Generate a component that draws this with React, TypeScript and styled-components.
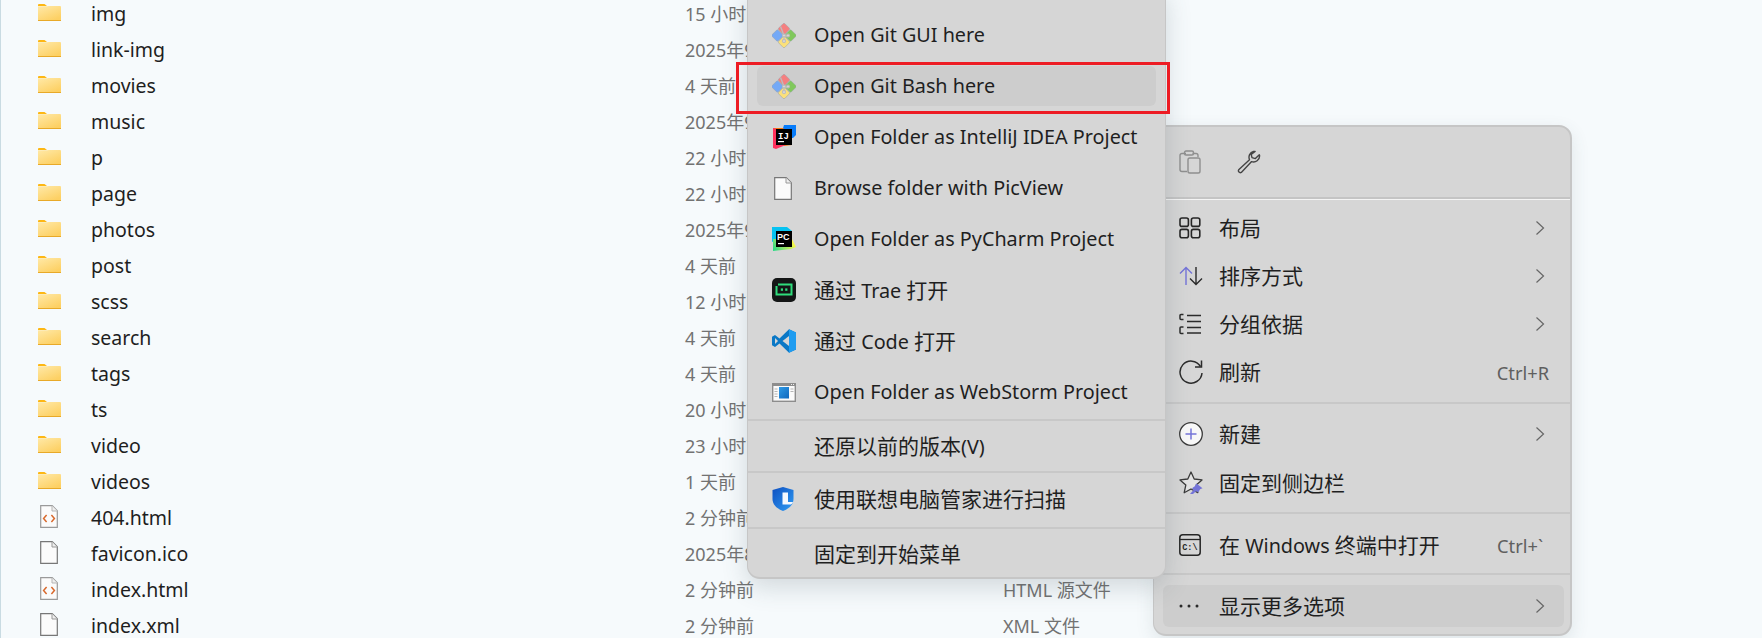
import React from "react";
import styled, { createGlobalStyle } from "styled-components";

const Global = createGlobalStyle`
  html, body { margin: 0; padding: 0; background: #f6fafc; }
  body { font-family: "Noto Sans", "Noto Sans CJK SC", sans-serif; }
`;

const Page = styled.div`
  position: relative;
  width: 1762px;
  height: 638px;
  overflow: hidden;
  background: #f6fafc;
  border-left: 1px solid #c9dbe2;
  box-sizing: border-box;
`;

const FileList = styled.div`
  display: flex;
  flex-direction: column;
  margin-top: -4px;
`;

const FileRow = styled.div`
  display: grid;
  grid-template-columns: 53px 594px 318px 1fr;
  align-items: center;
  height: 36px;
  padding-left: 37px;
  white-space: nowrap;
`;

const IconCell = styled.div`
  display: flex;
  align-items: center;
  height: 36px;
  padding-bottom: 4px;
  box-sizing: border-box;
  svg { display: block; }
`;

const FileName = styled.span`
  color: #1e1e1e;
  font-size: 19.5px;
  padding-bottom: 2px;
`;

const FileMeta = styled.span`
  color: #727272;
  font-size: 18px;
  padding-bottom: 3px;
`;

const MenuBase = styled.div`
  position: absolute;
  box-sizing: border-box;
  background: #d6d6d6;
  font-size: 19.8px;
  color: #1c1c1c;
`;

const GitMenu = styled(MenuBase)`
  left: 746px;
  top: -12px;
  width: 419px;
  height: 591px;
  padding-top: 26px;
  border-radius: 0 0 13px 13px;
  border: 1px solid #c6c6c6;
  border-bottom-width: 2px;
  z-index: 2;
  box-shadow: 0 8px 26px rgba(60, 80, 90, 0.2);
`;

const MainMenu = styled(MenuBase)`
  left: 1152px;
  top: 125px;
  width: 419px;
  height: 511px;
  border-radius: 13px;
  border: 1px solid #c6c6c6;
  border-width: 2px 2px 2px 1px;
  z-index: 1;
  box-shadow: 0 6px 18px rgba(60, 80, 90, 0.12);
`;

const Toolbar = styled.div`
  display: flex;
  align-items: center;
  gap: 36px;
  height: 70px;
  padding-left: 25px;
  border-bottom: 2px solid #c4c4c4;
  box-shadow: 0 1px 0 #f4f4f4;
`;

const Section = styled.div<{ $top: number; $bottom: number; $gap: number; $right?: number; $line?: boolean }>`
  display: flex;
  flex-direction: column;
  gap: ${(p) => p.$gap}px;
  padding: ${(p) => p.$top}px ${(p) => p.$right ?? 9}px ${(p) => p.$bottom}px 9px;
  border-bottom: ${(p) => (p.$line ? "2px solid #c8c8c8" : "0")};
`;

const Item = styled.div<{ $active?: boolean; $h: number; $iconX: number; $textX: number }>`
  display: grid;
  grid-template-columns: ${(p) => p.$textX}px 1fr auto;
  align-items: center;
  height: ${(p) => p.$h}px;
  padding-left: ${(p) => p.$iconX}px;
  padding-right: 15px;
  border-radius: 6px;
  white-space: nowrap;
  background: ${(p) => (p.$active ? "#cdcdcd" : "transparent")};
  svg { display: block; }
`;

const Label = styled.span`
  color: #1f1f1f;
  line-height: 1;
`;

const Han = styled.span`
  font-size: 21px;
`;

const Shortcut = styled.span`
  color: #5f5f5f;
  font-size: 18.3px;
  min-width: 52px;
`;

const Chevron = styled.svg`
  width: 10px;
  height: 16px;
  margin-right: 4px;
`;

const Highlight = styled.div`
  position: absolute;
  left: 735px;
  top: 62px;
  width: 434px;
  height: 52px;
  box-sizing: border-box;
  border: 3px solid #ed1c24;
  z-index: 3;
`;

const FileSlot = styled.span`
  display: block;
  padding-left: 2px;
`;

const Folder = () => (
  <svg width="23" height="17" viewBox="0 0 23 17">
    <defs>
      <linearGradient id="fg" x1="0" y1="0" x2="0.6" y2="1">
        <stop offset="0" stopColor="#ffe9a8" />
        <stop offset="1" stopColor="#fdd063" />
      </linearGradient>
    </defs>
    <path d="M0 1a1 1 0 0 1 1-1h5.500l2.500 2H0z" fill="#fdb714" />
    <path d="M0 2.200h9L11 2h11a1 1 0 0 1 1 1v14H0z" fill="url(#fg)" />
    <rect x="0" y="16" width="23" height="1" fill="#e8a928" />
  </svg>
);

const Doc = ({ html, dark }: { html?: boolean; dark?: boolean }) => (
  <svg width="18" height="23" viewBox="0 0 18 23">
    <path d="M.7.7h11.500l5.100 5.100v16.500H.7z" fill="#fbfbfb" stroke={dark ? "#777" : "#9a9a9a"} strokeWidth="1.200" />
    <path d="M12 .7v5.300h5.300" fill="#efefef" stroke={dark ? "#999" : "#b5b5b5"} strokeWidth="1" />
    {html && (
      <g fill="none" stroke="#d9692c" strokeWidth="1.500">
        <path d="M6.600 10 3.600 13.500l3 3.500" />
        <path d="M11.400 10l3 3.500-3 3.500" />
      </g>
    )}
  </svg>
);

const GitIcon = () => (
  <svg width="24" height="25" viewBox="0 0 24 25">
    <g transform="rotate(45 12 12.500)" stroke="#9aa3a8" strokeWidth="0.5">
      <rect x="3" y="3.500" width="8.700" height="8.700" rx="1.300" fill="#f57f80" />
      <rect x="12.300" y="3.500" width="8.700" height="8.700" rx="1.300" fill="#80c85c" />
      <rect x="12.300" y="12.800" width="8.700" height="8.700" rx="1.300" fill="#fbe07a" />
      <rect x="3" y="12.800" width="8.700" height="8.700" rx="1.300" fill="#74a9f6" />
    </g>
    <g stroke="#bdbdbd" strokeWidth="1.300" fill="#e8e8e8">
      <path d="M8.500 3.500 12 12.500l4.500 1M12 12.500v5.500" fill="none" />
      <circle cx="12" cy="12.500" r="1.300" />
      <circle cx="16" cy="12.500" r="1.300" />
      <circle cx="12" cy="18" r="1.500" />
    </g>
  </svg>
);

const IdeaIcon = () => (
  <svg width="24" height="25" viewBox="0 0 24 25">
    <path d="M12 0h12v10l-3 3H8z" fill="#087cfa" />
    <path d="M1 3h10l9 10v7l-8 1z" fill="#f97a12" />
    <path d="M1 3l11 3 4 13-12 5-3-1z" fill="#fe315d" />
    <rect x="4" y="4" width="16" height="16" fill="#000" />
    <rect x="6" y="16" width="6" height="1.200" fill="#fff" />
    <text x="6" y="13.500" fontSize="9" fontWeight="700" fontFamily="Liberation Mono, monospace" fill="#fff">IJ</text>
  </svg>
);

const PyIcon = () => (
  <svg width="24" height="25" viewBox="0 0 24 25">
    <defs>
      <linearGradient id="pc" x1="0" y1="1" x2="1" y2="0.6">
        <stop offset="0" stopColor="#21d789" />
        <stop offset="1" stopColor="#fcf84a" />
      </linearGradient>
    </defs>
    <path d="M0 0h15l5 4v9H4l-4 2z" fill="#07c3f2" />
    <path d="M1 12h19l4 8-5 2-18 2z" fill="url(#pc)" />
    <rect x="4" y="4" width="16" height="16" fill="#000" />
    <rect x="6" y="16" width="6" height="1.200" fill="#fff" />
    <text x="5" y="13" fontSize="9" fontWeight="700" fontFamily="Liberation Sans, sans-serif" fill="#fff">PC</text>
  </svg>
);

const TraeIcon = () => (
  <svg width="24" height="24" viewBox="0 0 24 24">
    <rect width="24" height="24" rx="5" fill="#141616" />
    <path d="M6 6.500h13.500v10H4.500V8" fill="none" stroke="#2fdc7b" strokeWidth="2" />
    <rect x="8.800" y="10.400" width="2.200" height="2.400" fill="#2fdc7b" />
    <rect x="13.200" y="10.400" width="2.200" height="2.400" fill="#2fdc7b" />
  </svg>
);

const CodeIcon = () => (
  <svg width="24" height="24" viewBox="0 0 24 24">
    <path d="M17 0.300 24 3.500v17l-7 3.200L7.500 14.500 3 18 0 16.200V7.800L3 6l4.500 3.500z" fill="#0a78c6" />
    <path d="M17 .3 24 3.500v17l-7 3.200z" fill="#1f9cf0" />
    <path d="M17 7 10.500 12 17 17z" fill="#d6d6d6" />
    <path d="M3 9v6l3-3z" fill="#d6d6d6" />
  </svg>
);

const StormIcon = () => (
  <svg width="24" height="19" viewBox="0 0 24 19">
    <rect x=".7" y=".7" width="22.600" height="17.600" fill="#fafafa" stroke="#8d8d8d" strokeWidth="1.400" />
    <rect x="1" y="1" width="22" height="2" fill="#8d8d8d" />
    <path d="M19 1.500h1M21 1.500h1" stroke="#eee" />
    <path d="M2.500 6h3M2.500 8.500h3M2.500 11h3M2.500 13.500h3M18.500 6h3M18.500 8.500h3" stroke="#b5b5b5" />
    <defs>
      <linearGradient id="ws" x1="0" y1="0" x2="1" y2="1">
        <stop offset="0" stopColor="#2f9be6" />
        <stop offset="1" stopColor="#0f67bd" />
      </linearGradient>
    </defs>
    <rect x="7" y="4" width="10" height="11.500" fill="url(#ws)" />
  </svg>
);

const ShieldIcon = () => (
  <svg width="22" height="24" viewBox="0 0 22 24">
    <defs>
      <linearGradient id="sh" x1="0" y1="0" x2="1" y2="1">
        <stop offset="0" stopColor="#0e4fc0" />
        <stop offset="1" stopColor="#2f9df5" />
      </linearGradient>
    </defs>
    <path d="M11 0 21.500 3v9c0 6-5 10-10.500 12C5.500 22 .5 18 .5 12V3z" fill="url(#sh)" />
    <path d="M10.500 5.500h5.500V15h5c-.6 1.500-1.300 2-2 2.500H10.500z" fill="#f4f8ff" />
  </svg>
);

const ClipboardIcon = () => (
  <svg width="22" height="24" viewBox="0 0 22 24" fill="none" stroke="#8f8f8f" strokeWidth="1.400">
    <path d="M7 3.500H3A2 2 0 0 0 1 5.500v14a2 2 0 0 0 2 2h5" />
    <path d="M13.500 3.500H17a2 2 0 0 1 2 2v1.500" />
    <rect x="5.500" y="1" width="9" height="4" rx="1.500" />
    <rect x="9" y="8" width="12" height="15" rx="1.800" />
  </svg>
);

const WrenchIcon = () => (
  <svg width="24" height="24" viewBox="0 0 24 24" fill="none" stroke="#444" strokeWidth="1.400" strokeLinejoin="round">
    <path d="M16.500 1.500a6 6 0 0 0-4 8.200L1.700 19.800a1.900 1.900 0 0 0 2.600 2.600L14.600 11.600a6 6 0 0 0 8-5.800l-.3-1-3.900 3.800-3.400-1-.8-3.200 3.900-3z" />
  </svg>
);

const GridIcon = () => (
  <svg width="22" height="22" viewBox="0 0 22 22" fill="none" stroke="#262626" strokeWidth="1.600">
    <rect x="1" y="1" width="8.400" height="8.400" rx="2" />
    <rect x="12.400" y="1" width="8.400" height="8.400" rx="2" />
    <rect x="1" y="12.400" width="8.400" height="8.400" rx="2" />
    <rect x="12.400" y="12.400" width="8.400" height="8.400" rx="2" />
  </svg>
);

const SortIcon = () => (
  <svg width="24" height="20" viewBox="0 0 24 20" fill="none" strokeWidth="1.400">
    <path d="M7 19V1.500M1 7.500l6-6 6 6" stroke="#7474d8" />
    <path d="M17 1v17.500M11 12.500l6 6 6-6" stroke="#2a2a2a" />
  </svg>
);

const GroupIcon = () => (
  <svg width="22" height="22" viewBox="0 0 22 22" fill="none" stroke="#2b2b2b" strokeWidth="1.500">
    <path d="M8 2.500h14M8 8.500h14M8 14.500h14M8 20h14" />
    <path d="M4.500 1.500H2a1 1 0 0 0-1 1v3a1 1 0 0 0 1 1h2.500M4.500 14H2a1 1 0 0 0-1 1v4.500a1 1 0 0 0 1 1h2.500" />
  </svg>
);

const RefreshIcon = () => (
  <svg width="24" height="24" viewBox="0 0 24 24" fill="none" stroke="#2b2b2b" strokeWidth="1.500">
    <path d="M21.500 6.500A11 11 0 1 0 23 13" />
    <path d="M22.500 .5v6.500H16" />
  </svg>
);

const PlusIcon = () => (
  <svg width="24" height="24" viewBox="0 0 24 24">
    <circle cx="12" cy="12" r="11.300" fill="#f8f8f8" stroke="#3a3a3a" strokeWidth="1.300" />
    <path d="M12 6.500v11M6.500 12h11" stroke="#7474d8" strokeWidth="1.500" />
  </svg>
);

const StarPinIcon = () => (
  <svg width="24" height="24" viewBox="0 0 24 24">
    <path d="M12 1l3.200 7 7.800.9-5.800 5.200 1.600 7.600L12 18l-6.800 3.700 1.600-7.600L1 8.900 8.800 8z" fill="#e4e4e4" stroke="#3a3a3a" strokeWidth="1.300" strokeLinejoin="round" />
    <path d="M17.500 12.500l6 4.800-2.400 1-2 3.200-1.800-1.500-3.300 3h-3l3.500-4-1.500-1.800 2.800-2z" fill="#7474d8" />
  </svg>
);

const TerminalIcon = () => (
  <svg width="22" height="22" viewBox="0 0 22 22">
    <rect x=".8" y=".8" width="20.400" height="20.400" rx="3" fill="none" stroke="#262626" strokeWidth="1.500" />
    <path d="M1 5.500h20" stroke="#262626" strokeWidth="1.300" />
    <text x="3.200" y="16" fontSize="8.500" fontWeight="700" fontFamily="Liberation Mono, monospace" fill="#262626">C:\</text>
  </svg>
);

const DotsIcon = () => (
  <svg width="20" height="4" viewBox="0 0 20 4" fill="#2a2a2a">
    <circle cx="2" cy="2" r="1.500" />
    <circle cx="10" cy="2" r="1.500" />
    <circle cx="18" cy="2" r="1.500" />
  </svg>
);

const ChevronRight = () => (
  <Chevron viewBox="0 0 10 16" fill="none" stroke="#666" strokeWidth="1.200">
    <path d="M1.500 1.500 8.500 8l-7 6.500" />
  </Chevron>
);

const MenuText = ({ text }: { text: string }) => (
  <Label>
    {text.split(/([\u3000-\u9fff]+)/).map((part, i) =>
      i % 2 === 1 ? <Han key={i}>{part}</Han> : <React.Fragment key={i}>{part}</React.Fragment>
    )}
  </Label>
);

type FileKind = "folder" | "html" | "plain";
const files: { name: string; date: string; type?: string; kind: FileKind }[] = [
  { name: "img", date: "15 小时前", kind: "folder" },
  { name: "link-img", date: "2025年9月", kind: "folder" },
  { name: "movies", date: "4 天前", kind: "folder" },
  { name: "music", date: "2025年9月", kind: "folder" },
  { name: "p", date: "22 小时前", kind: "folder" },
  { name: "page", date: "22 小时前", kind: "folder" },
  { name: "photos", date: "2025年9月", kind: "folder" },
  { name: "post", date: "4 天前", kind: "folder" },
  { name: "scss", date: "12 小时前", kind: "folder" },
  { name: "search", date: "4 天前", kind: "folder" },
  { name: "tags", date: "4 天前", kind: "folder" },
  { name: "ts", date: "20 小时前", kind: "folder" },
  { name: "video", date: "23 小时前", kind: "folder" },
  { name: "videos", date: "1 天前", kind: "folder" },
  { name: "404.html", date: "2 分钟前", kind: "html" },
  { name: "favicon.ico", date: "2025年8月", kind: "plain" },
  { name: "index.html", date: "2 分钟前", type: "HTML 源文件", kind: "html" },
  { name: "index.xml", date: "2 分钟前", type: "XML 文件", kind: "plain" },
];

const fileIcon = (kind: FileKind) => {
  if (kind === "folder") return <Folder />;
  return <FileSlot><Doc html={kind === "html"} dark={kind === "plain"} /></FileSlot>;
};

const gitRows: { label: string; icon: React.ReactNode; active?: boolean }[] = [
  { label: "Open Git GUI here", icon: <GitIcon /> },
  { label: "Open Git Bash here", icon: <GitIcon />, active: true },
  { label: "Open Folder as IntelliJ IDEA Project", icon: <IdeaIcon /> },
  { label: "Browse folder with PicView", icon: <FileSlot><Doc dark /></FileSlot> },
  { label: "Open Folder as PyCharm Project", icon: <PyIcon /> },
  { label: "通过 Trae 打开", icon: <TraeIcon /> },
  { label: "通过 Code 打开", icon: <CodeIcon /> },
  { label: "Open Folder as WebStorm Project", icon: <StormIcon /> },
];

const G = { $h: 40, $iconX: 15, $textX: 42 };
const M = { $h: 42, $iconX: 16, $textX: 40 };

export default function App() {
  return (
    <Page>
      <Global />
      <FileList>
        {files.map((f) => (
          <FileRow key={f.name}>
            <IconCell>{fileIcon(f.kind)}</IconCell>
            <FileName>{f.name}</FileName>
            <FileMeta>{f.date}</FileMeta>
            {f.type && <FileMeta>{f.type}</FileMeta>}
          </FileRow>
        ))}
      </FileList>

      <Highlight />

      <GitMenu>
        <Section $top={0} $bottom={7} $gap={11} $line>
          {gitRows.map((r) => (
            <Item key={r.label} {...G} $active={r.active}>
              {r.icon}
              <MenuText text={r.label} />
            </Item>
          ))}
        </Section>
        <Section $top={5} $bottom={5} $gap={0} $line>
          <Item {...G}>
            <span />
            <MenuText text="还原以前的版本(V)" />
          </Item>
        </Section>
        <Section $top={6} $bottom={8} $gap={0} $line>
          <Item {...G}>
            <ShieldIcon />
            <MenuText text="使用联想电脑管家进行扫描" />
          </Item>
        </Section>
        <Section $top={5} $bottom={0} $gap={0}>
          <Item {...G}>
            <span />
            <MenuText text="固定到开始菜单" />
          </Item>
        </Section>
      </GitMenu>

      <MainMenu>
        <Toolbar>
          <ClipboardIcon />
          <WrenchIcon />
        </Toolbar>
        <Section $top={8} $bottom={9} $gap={6} $right={6} $line>
          <Item {...M}><GridIcon /><MenuText text="布局" /><ChevronRight /></Item>
          <Item {...M}><SortIcon /><MenuText text="排序方式" /><ChevronRight /></Item>
          <Item {...M}><GroupIcon /><MenuText text="分组依据" /><ChevronRight /></Item>
          <Item {...M}><RefreshIcon /><MenuText text="刷新" /><Shortcut>Ctrl+R</Shortcut></Item>
        </Section>
        <Section $top={9} $bottom={8} $gap={7} $right={6} $line>
          <Item {...M}><PlusIcon /><MenuText text="新建" /><ChevronRight /></Item>
          <Item {...M}><StarPinIcon /><MenuText text="固定到侧边栏" /></Item>
        </Section>
        <Section $top={10} $bottom={7} $gap={0} $right={6} $line>
          <Item {...M}><TerminalIcon /><MenuText text="在 Windows 终端中打开" /><Shortcut>Ctrl+`</Shortcut></Item>
        </Section>
        <Section $top={10} $bottom={0} $gap={0} $right={6}>
          <Item {...M} $active><DotsIcon /><MenuText text="显示更多选项" /><ChevronRight /></Item>
        </Section>
      </MainMenu>
    </Page>
  );
}
